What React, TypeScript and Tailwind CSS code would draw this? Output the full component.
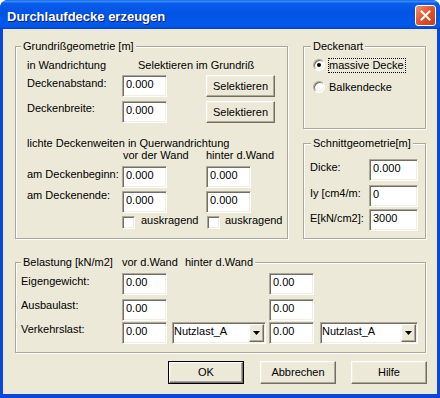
import React from "react";

const sunken =
  "bg-white border border-t-[#ACA899] border-l-[#ACA899] border-r-white border-b-white shadow-[inset_1px_1px_0_#716F64,inset_-1px_-1px_0_#F1EFE2]";
const raised =
  "shrink-0 bg-[#ECE9D8] border border-t-white border-l-white border-r-[#716F64] border-b-[#716F64] shadow-[inset_-1px_-1px_0_#ACA899,inset_1px_1px_0_#F1EFE2]";

function Edit({ w, v, cls = "" }: { w: string; v: string; cls?: string }) {
  return (
    <div
      className={`h-[22px] shrink-0 ${sunken} pl-[3px] pt-[2px] leading-[13px] overflow-hidden whitespace-nowrap ${w} ${cls}`}
    >
      {v}
    </div>
  );
}

function Check({ cls = "" }: { cls?: string }) {
  return <div className={`w-[13px] h-[13px] shrink-0 ${sunken} ${cls}`} />;
}

function Radio({ on }: { on?: boolean }) {
  return (
    <div
      className={`w-[12px] h-[12px] mt-[1px] shrink-0 rounded-full ${sunken} flex items-center justify-center`}
    >
      {on && <div className="w-[4px] h-[4px] rounded-full bg-black" />}
    </div>
  );
}

function Select({ w, cls = "" }: { w: string; cls?: string }) {
  return (
    <div className={`h-[22px] shrink-0 flex ${sunken} p-[1px] ${w} ${cls}`}>
      <div className="flex-1 pt-[1px] leading-[13px] whitespace-nowrap overflow-hidden">
        Nutzlast_A
      </div>
      <div className={`${raised} w-[15px] h-[18px] flex items-center justify-center`}>
        <svg width="7" height="4" viewBox="0 0 7 4">
          <path d="M0 0H7L3.5 4Z" fill="#000" />
        </svg>
      </div>
    </div>
  );
}

function Btn({ label, cls }: { label: string; cls: string }) {
  return (
    <div className={`${raised} h-[22px] flex items-center justify-center ${cls}`}>
      {label}
    </div>
  );
}

function Group({
  cap,
  cls,
  capCls,
  children,
}: {
  cap: React.ReactNode;
  cls: string;
  capCls: string;
  children: React.ReactNode;
}) {
  return (
    <div
      className={`shrink-0 border border-[#ACA899] shadow-[inset_1px_1px_0_#FFFFFF,1px_1px_0_#FFFFFF] ${cls}`}
    >
      <div
        className={`-mt-[7px] h-[13px] leading-[13px] w-fit bg-[#ECE9D8] px-[2px] whitespace-nowrap ${capCls}`}
      >
        {cap}
      </div>
      {children}
    </div>
  );
}

export default function App() {
  return (
    <div className="w-[440px] h-[398px] font-['Liberation_Sans',Arial,sans-serif] text-[11px] leading-[13px] text-black">
      <div className="w-[440px] h-[398px] flex flex-col bg-[#0A47DC] rounded-t-[8px] overflow-hidden">
        {/* Title bar */}
        <div className="h-[29px] shrink-0 flex items-start bg-[linear-gradient(180deg,#0A5FE8_0%,#3D8FF7_4%,#0A5CEC_12%,#0054E3_45%,#0058EC_80%,#0056E6_92%,#0042C8_100%)]">
          <div className="ml-[7px] mt-[9px] text-[13px] leading-[15px] font-bold text-white whitespace-nowrap [text-shadow:1px_1px_0_#0A1883]">
            Durchlaufdecke erzeugen
          </div>
          <div className="ml-auto mr-[4px] mt-[5px] w-[21px] h-[21px] rounded-[3px] border border-white bg-[linear-gradient(135deg,#F29470_0%,#E2582F_45%,#C73A18_100%)] flex items-center justify-center">
            <svg width="11" height="11" viewBox="0 0 11 11">
              <path
                d="M1.5 1.5L9.5 9.5M9.5 1.5L1.5 9.5"
                stroke="#fff"
                strokeWidth="2"
                strokeLinecap="square"
              />
            </svg>
          </div>
        </div>

        {/* Client */}
        <div className="flex-1 mx-[3px] mb-[4px] bg-[#ECE9D8] pl-[12px] pt-[17px]">
          <div className="flex items-start">
            {/* Grundrissgeometrie */}
            <Group cap="Grundrißgeometrie [m]" cls="w-[273px] h-[193px]" capCls="ml-[5px]">
              <div className="pl-[11px]">
                <div className="mt-[6px] flex h-[13px] whitespace-nowrap">
                  <span className="w-[111px] shrink-0">in Wandrichtung</span>
                  <span>Selektieren im Grundriß</span>
                </div>
                <div className="mt-[3px] flex items-start h-[22px]">
                  <span className="w-[95px] shrink-0 mt-[2px] whitespace-nowrap">Deckenabstand:</span>
                  <Edit w="w-[45px]" v="0.000" />
                  <Btn label="Selektieren" cls="ml-[39px] w-[69px]" />
                </div>
                <div className="mt-[4px] flex items-start h-[22px]">
                  <span className="w-[95px] shrink-0 mt-[1px] whitespace-nowrap">Deckenbreite:</span>
                  <Edit w="w-[45px]" v="0.000" />
                  <Btn label="Selektieren" cls="ml-[39px] w-[69px]" />
                </div>
                <div className="mt-[14px] h-[12px] leading-[12px] whitespace-nowrap">
                  lichte Deckenweiten in Querwandrichtung
                </div>
                <div className="flex h-[12px] leading-[12px] whitespace-nowrap">
                  <span className="ml-[96px] w-[83px] shrink-0">vor der Wand</span>
                  <span>hinter d.Wand</span>
                </div>
                <div className="mt-[5px] flex items-start h-[22px]">
                  <span className="w-[95px] shrink-0 mt-[2px] whitespace-nowrap">am Deckenbeginn:</span>
                  <Edit w="w-[45px]" v="0.000" />
                  <Edit w="w-[45px]" v="0.000" cls="ml-[39px]" />
                </div>
                <div className="mt-[3px] flex items-start h-[22px]">
                  <span className="w-[95px] shrink-0 -mt-[2px] whitespace-nowrap">am Deckenende:</span>
                  <Edit w="w-[45px]" v="0.000" />
                  <Edit w="w-[45px]" v="0.000" cls="ml-[39px]" />
                </div>
                <div className="mt-[3px] flex items-start h-[13px]">
                  <Check cls="ml-[95px]" />
                  <span className="ml-[6px] w-[66px] shrink-0 -mt-[2px]">auskragend</span>
                  <Check />
                  <span className="ml-[5px] -mt-[2px]">auskragend</span>
                </div>
              </div>
            </Group>

            {/* Right column */}
            <div className="ml-[15px] flex flex-col">
              <Group cap="Deckenart" cls="w-[123px] h-[83px]" capCls="ml-[7px]">
                <div className="pl-[9px]">
                  <div className="mt-[5px] flex items-start">
                    <Radio on />
                    <span className="ml-[3px] h-[15px] leading-[13px] border border-dotted border-black pr-[1px] whitespace-nowrap">
                      massive Decke
                    </span>
                  </div>
                  <div className="mt-[7px] flex items-start">
                    <Radio />
                    <span className="ml-[3px] h-[15px] leading-[13px] border border-transparent whitespace-nowrap">
                      Balkendecke
                    </span>
                  </div>
                </div>
              </Group>

              <Group cap="Schnittgeometrie[m]" cls="w-[123px] h-[96px] mt-[14px]" capCls="ml-[7px]">
                <div className="pl-[6px]">
                  <div className="mt-[9px] flex items-start">
                    <span className="w-[59px] shrink-0 mt-[2px] whitespace-nowrap">Dicke:</span>
                    <Edit w="w-[49px]" v="0.000" />
                  </div>
                  <div className="mt-[4px] flex items-start">
                    <span className="w-[59px] shrink-0 mt-[2px] whitespace-nowrap">Iy [cm4/m:</span>
                    <Edit w="w-[49px]" v="0" />
                  </div>
                  <div className="mt-[2px] flex items-start">
                    <span className="w-[59px] shrink-0 mt-[3px] whitespace-nowrap">E[kN/cm2]:</span>
                    <Edit w="w-[49px]" v="3000" />
                  </div>
                </div>
              </Group>
            </div>
          </div>

          {/* Belastung */}
          <Group
            cap={
              <>
                <span className="w-[99px] shrink-0">Belastung [kN/m2]</span>
                <span className="w-[63px] shrink-0">vor d.Wand</span>
                <span>hinter d.Wand</span>
              </>
            }
            cls="w-[411px] h-[91px] mt-[23px]"
            capCls="ml-[5px] flex"
          >
            <div className="pl-[5px]">
              <div className="mt-[4px] flex items-start">
                <span className="w-[101px] shrink-0 mt-[2px] whitespace-nowrap">Eigengewicht:</span>
                <Edit w="w-[45px]" v="0.00" />
                <Edit w="w-[45px]" v="0.00" cls="ml-[102px]" />
              </div>
              <div className="mt-[4px] flex items-start">
                <span className="w-[101px] shrink-0 whitespace-nowrap">Ausbaulast:</span>
                <Edit w="w-[45px]" v="0.00" />
                <Edit w="w-[45px]" v="0.00" cls="ml-[102px]" />
              </div>
              <div className="mt-[1px] flex items-start">
                <span className="w-[101px] shrink-0 mt-[1px] whitespace-nowrap">Verkehrslast:</span>
                <Edit w="w-[45px]" v="0.00" />
                <Select w="w-[94px]" cls="ml-[5px]" />
                <Edit w="w-[45px]" v="0.00" cls="ml-[3px]" />
                <Select w="w-[98px]" cls="ml-[6px]" />
              </div>
            </div>
          </Group>

          {/* Buttons */}
          <div className="mt-[8px] flex h-[23px]">
            <div className="ml-[153px] w-[76px] h-[23px] shrink-0 border border-black">
              <div className={`${raised} w-full h-full flex items-center justify-center`}>OK</div>
            </div>
            <div className={`${raised} ml-[16px] w-[76px] h-[23px] flex items-center justify-center`}>
              Abbrechen
            </div>
            <div className={`${raised} ml-[15px] w-[76px] h-[23px] flex items-center justify-center`}>
              Hilfe
            </div>
          </div>
        </div>
      </div>
    </div>
  );
}
